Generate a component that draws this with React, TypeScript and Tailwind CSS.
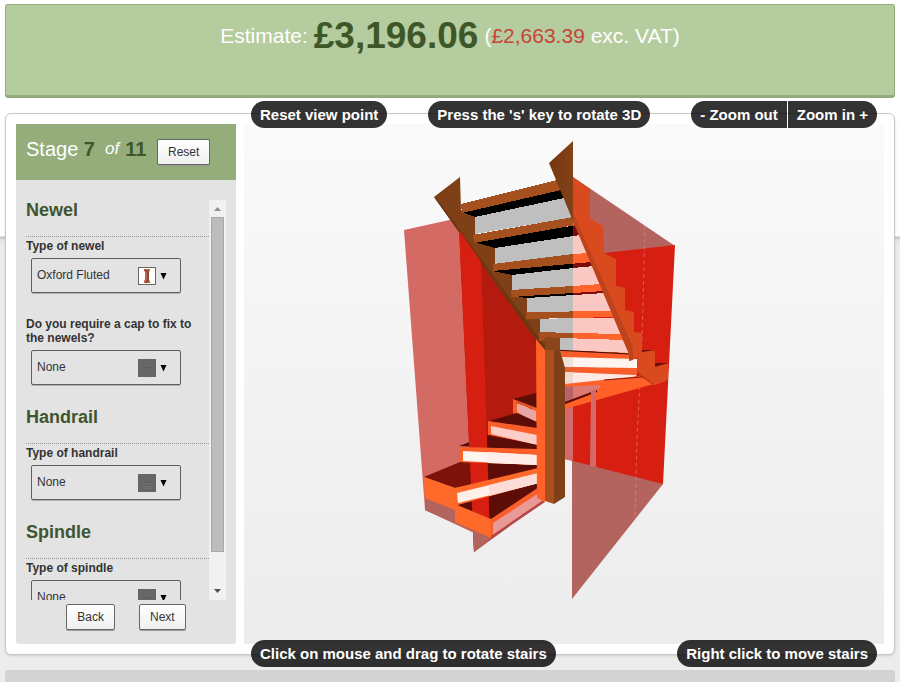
import React, { useState } from 'react';

type ThumbKind = 'newel' | 'cap' | 'handrail' | 'spindle';

interface Field {
  id: string;
  label: string;
  options: string[];
  thumb: ThumbKind;
}

interface Section {
  title: string;
  fields: Field[];
}

const SECTIONS: Section[] = [
  {
    title: 'Newel',
    fields: [
      { id: 'newel-type', label: 'Type of newel', options: ['Oxford Fluted', 'None'], thumb: 'newel' },
      { id: 'newel-cap', label: 'Do you require a cap to fix to the newels?', options: ['None'], thumb: 'cap' },
    ],
  },
  {
    title: 'Handrail',
    fields: [{ id: 'handrail-type', label: 'Type of handrail', options: ['None'], thumb: 'handrail' }],
  },
  {
    title: 'Spindle',
    fields: [{ id: 'spindle-type', label: 'Type of spindle', options: ['None'], thumb: 'spindle' }],
  },
];

// upper flight, from the top step down
const FLIGHT = [
  {
    tread: '461,204 557,180 561,190 462,213',
    shadow: '462,212 560,189 564,198 475,217',
    riser: '475,217 563,198 574,217 475,234',
  },
  {
    tread: '473,235 573,217 576,225 474,243',
    shadow: '474,242 577,225 580,235 495,248',
    riser: '495,247 580,235 588,253 495,265',
  },
  {
    tread: '493,264 573,254 588,253 592,262 493,271',
    shadow: '493,271 573,263 592,262 594,266 573,268 512,275',
    riser: '512,275 573,268 594,266 601,284 573,286 512,290',
  },
  {
    tread: '511,290 573,286 601,284 604,291 511,297',
    shadow: '511,296 604,291 605,293 527,298',
    riser: '527,298 605,293 612,311 527,313',
  },
  {
    tread: '526,312 612,311 616,317 526,319',
    shadow: '',
    riser: '540,319 573,318 616,318 622,334 573,333 540,332',
  },
  {
    tread: '539,332 573,333 622,334 625,340 560,338 539,341',
    shadow: '',
    riser: '560,337 573,337 625,340 629,353 560,350',
  },
];

const Flight: React.FC<{ tread: string; shadow: string; riser: string }> = ({ tread, shadow, riser }) => (
  <>
    {FLIGHT.map((step) => (
      <g key={step.tread}>
        <polygon points={step.riser} fill={riser} />
        {step.shadow && <polygon points={step.shadow} fill={shadow} />}
        <polygon points={step.tread} fill={tread} />
      </g>
    ))}
  </>
);

const Staircase: React.FC = () => (
  <svg viewBox="244 124 640 520" className="block w-full" role="img" aria-label="3D staircase">
    <defs>
      <clipPath id="behind-wall">
        <rect x="573" y="124" width="120" height="300" />
      </clipPath>
      <linearGradient id="timber" x1="0" y1="0" x2="1" y2="0">
        <stop offset="0" stopColor="#743810" />
        <stop offset="1" stopColor="#844117" />
      </linearGradient>
    </defs>

    {/* left walls */}
    <polygon points="404,230 454,219 462,232 476,533 474,533 425,510" fill="#d36a63" />
    <polygon points="425,497 457,510 476,520 476,533 425,510" fill="#b4645f" />
    <polygon points="459,226 481,262 545,345 545,500 474,552" fill="#b51a0f" />
    <polygon points="487,440 536,420 545,440 545,500 491,538" fill="#5c0d08" />

    {/* right walls */}
    <polygon points="573,177 675,246 604,254 573,254" fill="#b4645f" />
    <polygon points="572,459 663,482 663,484 572,599" fill="#b4645f" />
    <polygon points="573,254 604,253 675,245 663,484 565,459 565,384 573,384" fill="#d61f10" />
    <polygon points="565,405 573,403 573,461 565,459" fill="#d36a6c" />
    <polyline points="645,225 642,340 637,440 635,517" fill="none" stroke="#ee9a90" strokeWidth="1" strokeDasharray="4 3" opacity="0.5" />

    {/* upper flight */}
    <polygon
      points="434,197 460,177 461,210 475,215 475,234 495,247 495,265 512,275 512,290 527,297 527,313 540,319 540,332 550,340 550,352 543,350"
      fill="#7f3f17"
    />
    <polygon points="434,197 437,199 548,350 543,350" fill="#6f3510" />
    <g shapeRendering="crispEdges">
      <Flight tread="#a65020" shadow="#000000" riser="#bfbfbf" />
      <g clipPath="url(#behind-wall)">
        <Flight tread="#ff642d" shadow="#7a0c0c" riser="#fcc8c4" />
      </g>
    </g>

    {/* winders next to the right wall */}
    <polygon points="560,350 629,353 631,360 562,358" fill="#f95d29" />
    <polyline points="553,350 573,351 630,354" fill="none" stroke="#3d0805" strokeWidth="1" />
    <polygon points="562,357 637,359 637,369 562,367" fill="#fff5f0" />
    <polygon points="565,367 637,368 637,375 565,372" fill="#f95d29" />
    <polygon points="565,372 637,375 633,378 565,385" fill="#ffe9e3" />
    <polygon points="562,357 573,357 573,384 565,384" fill="#8a7a60" opacity="0.15" />
    <polygon points="565,384 640,376 654,385 668,380 565,409" fill="#ff6129" />
    <polygon points="565,387 600,385 600,388 565,403" fill="#dd7a74" />
    <polygon points="565,387 573,386 573,399 565,402" fill="#b4646a" />
    <polyline points="565,403 597,391" fill="none" stroke="#5c0d08" strokeWidth="2" />
    <polyline points="604,380 642,377" fill="none" stroke="#8e140b" strokeWidth="1" />
    <polygon points="591,392 596,390 596,467 590,466" fill="#d36a68" />

    {/* right stringer */}
    <polygon points="573,141 549,163 573,221" fill="url(#timber)" />
    <polygon
      points="573,177 590,189 590,218 603,226 604,253 616,259 616,286 625,288 625,310 634,312 634,332 642,333 642,352 637,358 629,361 629,354 573,221"
      fill="#d94a1e"
    />
    <polygon points="573,213 633,347 633,360 629,361 629,354 573,221" fill="#be431c" />
    <polygon points="642,351 655,350 655,366 668,363 668,380 654,385 637,372 637,358" fill="#d94a1e" />
    <polygon points="642,352 642,350 655,350" fill="#6e0f0b" />
    <polygon points="655,363 668,363 655,367" fill="#6e0f0b" />
    <polyline points="637,372 654,385" fill="none" stroke="#a93612" strokeWidth="1" />

    {/* lower flight */}
    <polygon points="513,399 536,393 545,396 545,412" fill="#5c0d08" />
    <polygon points="513,399 537,408 537,424 513,413" fill="#f95d29" />
    <polygon points="517,403 536,411 536,423 517,412" fill="#e9a6a4" />
    <polyline points="516,402 526,405 532,409" fill="none" stroke="#d94a1e" strokeWidth="2" />
    <polygon points="489,421 517,413 537,422 537,430" fill="#5c0d08" />
    <polygon points="488,421 537,428 537,445 488,435" fill="#f95d29" />
    <polygon points="491,426 537,435 537,445 491,434" fill="#fdcdca" />
    <polygon points="459,446 488,435 537,445 537,450" fill="#5c0d08" />
    <polygon points="424,477 460,462 488,463 488,481 455,488" fill="#7d120b" />
    <polygon points="487,462 537,465 537,469 487,481" fill="#5c0d08" />
    <polygon points="457,505 541,483 545,486 491,520" fill="#5c0d08" />
    <polygon points="459,230 481,262 487,440 490,538 474,552 469,440" fill="#d61f10" />
    <polygon points="473,528 491,530 491,539 474,552" fill="#b4645f" />
    <polygon points="459,447 537,449 537,465 460,462" fill="#fb5f2a" />
    <polygon points="463,451 537,455 537,465 463,461" fill="#fff5f0" />
    <polygon points="487,452 537,455 537,465 488,463" fill="#ffeeea" />
    <polygon points="424,477 455,488 538,468 539,483 457,505 491,519 491,538 425,498" fill="#ff6a2b" />
    <polygon points="425,498 455,510 455,522 425,510" fill="#b4645f" />
    <polygon points="455,508 491,524 491,538 455,522" fill="#ff6a2b" />
    <polygon points="457,493 539,473 539,483 458,503" fill="#fff1e8" />
    <polygon points="489,485 539,473 539,483 489,496" fill="#fddcd8" />
    <polygon points="491,519 545,483 545,500 491,538" fill="#f95d29" />
    <polygon points="493,523 545,489 545,499 493,535" fill="#ea9a96" />
    <polygon points="491,536 545,499 545,502 491,539" fill="#b4484a" />

    {/* newel post */}
    <polygon points="536,339 545,350 545,502 537,498" fill="#ff6129" />
    <polygon points="545,337 554,338 554,504 545,501" fill="#a65020" />
    <polygon points="545,337 560,338 560,350 545,350" fill="#8a4519" />
    <polygon points="554,350 560,350 565,368 565,497 554,504" fill="#7f3f17" />
  </svg>
);

const Thumb: React.FC<{ kind: ThumbKind }> = ({ kind }) => (
  <svg viewBox="0 0 18 18" className="h-[18px] w-[18px]" aria-hidden="true">
    {kind === 'newel' ? (
      <>
        <rect x="0.5" y="0.5" width="17" height="17" fill="#ffffff" stroke="#666666" />
        <path d="M6 2h6v2l-1 1v8l1 1v2H6v-2l1-2V5L6 4z" fill="#b0664f" />
        <path d="M7 3l3 2v8l-2 3" fill="none" stroke="#6d2a1c" strokeWidth="1" />
      </>
    ) : (
      <>
        <rect width="18" height="18" fill="#666666" />
        <path d="M5 8h8v1H5z" fill="#5c5c5c" />
        {kind === 'handrail' && <path d="M4 9.500h10M4 12.500h10M5 14.500h8" stroke="#747474" strokeWidth="1" />}
      </>
    )}
  </svg>
);

const OptionField: React.FC<{ field: Field }> = ({ field }) => {
  const [value, setValue] = useState(field.options[0]);

  return (
    <div>
      <label htmlFor={field.id} className="block text-[12px] leading-[14px] font-bold text-[#333]">
        {field.label}
      </label>
      <div className="relative mt-[5px] mb-px ml-[5px] w-[150px]">
        <select
          id={field.id}
          value={value}
          onChange={(e) => setValue(e.target.value)}
          className="block h-[35px] w-full appearance-none rounded-[2px] border border-[#5e5e5e] bg-transparent pr-12 pb-px pl-[5px] text-[12px] text-[#333] shadow-[0_1px_0_#b0b0b0]"
        >
          {field.options.map((option) => (
            <option key={option}>{option}</option>
          ))}
        </select>
        <div className="pointer-events-none absolute inset-y-0 right-[14px] flex items-center gap-1">
          <Thumb kind={field.thumb} />
          <svg viewBox="0 0 7 8" className="h-2 w-[7px]" aria-hidden="true">
            <path d="M0.500 1h6L3.500 7.500z" fill="#000000" />
          </svg>
        </div>
      </div>
    </div>
  );
};

const ScrollTrack: React.FC = () => (
  <div className="flex w-[17px] flex-col items-center bg-[#f1f1f1]" aria-hidden="true">
    <svg viewBox="0 0 17 17" className="h-[17px] w-[17px] shrink-0">
      <path d="M5 11l3.500-4 3.500 4z" fill="#8f8f8f" />
    </svg>
    <div className="w-[13px] flex-1 border border-[#a8a8a8] bg-[#bcbcbc]"></div>
    <svg viewBox="0 0 17 17" className="mt-[31px] h-[17px] w-[17px] shrink-0">
      <path d="M5 6l3.500 4 3.500-4z" fill="#505050" />
    </svg>
  </div>
);

const SmallButton: React.FC<{ children: React.ReactNode }> = ({ children }) => (
  <button
    type="button"
    className="h-[26px] rounded-[2px] border border-[#666] bg-gradient-to-b from-white to-[#f0f0f0] px-[10px] text-[12px] leading-[14px] text-[#333] shadow-[0_1px_0_#9a9a9a]"
  >
    {children}
  </button>
);

const App: React.FC = () => {
  return (
    <div className="flex min-h-screen flex-col bg-[#ececec] bg-[linear-gradient(#fff_0,#fff_236px,#c2c2c2_237px,#e4e4e4_240px,#ececec_246px)] px-[5px] pt-1 font-['Liberation_Sans',Arial,sans-serif]">
      <header className="flex h-[94px] items-start justify-center rounded-[3px] border border-b-[3px] border-[#93ab7c] bg-[#b4cc9e]">
        <p className="flex h-[62px] items-center gap-[6px] text-[21px] text-white">
          <span>Estimate:</span>
          <strong className="text-[37px] text-[#3f5728]">£3,196.06</strong>
          <span>
            (<span className="text-[#c8433a]">£2,663.39</span> exc. VAT)
          </span>
        </p>
      </header>

      <main className="mt-[15px] flex gap-2 rounded-md border border-[#c8c8c8] bg-white p-[10px] shadow-sm">
        <aside className="flex w-[220px] shrink-0 flex-col rounded-b-[3px] bg-[#e3e3e3]">
          <div className="flex h-14 items-center bg-[#94ad7b] px-[10px] text-[20px] text-white">
            <h1 className="flex w-[131px] items-center whitespace-pre pb-[6px]">
              Stage <b className="text-[#3f5728]">7</b>
              <i className="ml-[10px] text-[17px]">of</i>
              <b className="ml-[6px] text-[#3f5728]">11</b>
            </h1>
            <SmallButton>Reset</SmallButton>
          </div>

          <div className="mx-[10px] mt-5 flex h-[400px]">
            <form className="flex min-w-0 flex-1 flex-col gap-[21px] overflow-y-hidden">
              {SECTIONS.map((section) => (
                <section key={section.title}>
                  <h2 className="border-b border-dotted border-[#999] pb-4 text-[18px] leading-5 font-bold text-[#3f5530]">
                    {section.title}
                  </h2>
                  <div className="mt-[2px] flex flex-col gap-[23px]">
                    {section.fields.map((field) => (
                      <OptionField key={field.id} field={field} />
                    ))}
                  </div>
                </section>
              ))}
            </form>
            <ScrollTrack />
          </div>

          <div className="mt-1 flex justify-center gap-6 pb-[14px]">
            <SmallButton>Back</SmallButton>
            <SmallButton>Next</SmallButton>
          </div>
        </aside>

        <div className="relative min-w-0 flex-1 rounded-b-[3px] bg-gradient-to-b from-[#fafafa] to-[#ececec]">
          <Staircase />

          <div className="absolute inset-x-[7px] -top-[23px] flex justify-between text-[15px] leading-[27px] font-bold text-white">
            <button type="button" className="rounded-full bg-black/80 px-[9px]">
              Reset view point
            </button>
            <span className="rounded-full bg-black/80 px-[9px]">Press the 's' key to rotate 3D</span>
            <div className="flex gap-px">
              <button type="button" className="rounded-l-full bg-black/80 px-[9px]">
                - Zoom out
              </button>
              <button type="button" className="rounded-r-full bg-black/80 px-[9px]">
                Zoom in +
              </button>
            </div>
          </div>

          <div className="absolute inset-x-[7px] -bottom-[23px] flex justify-between text-[15px] leading-[27px] font-bold text-white">
            <span className="rounded-full bg-black/80 px-[9px]">Click on mouse and drag to rotate stairs</span>
            <span className="rounded-full bg-black/80 px-[9px]">Right click to move stairs</span>
          </div>
        </div>
      </main>

      <div className="mt-[15px] min-h-3 flex-1 rounded-t-[3px] bg-[#d3d3d3]"></div>
    </div>
  );
};

export default App;
